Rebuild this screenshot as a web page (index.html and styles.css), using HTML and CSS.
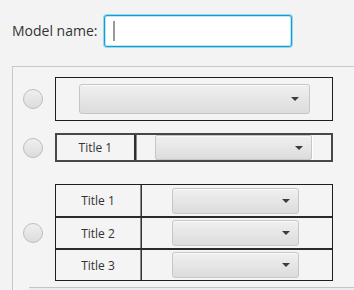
FILE: index.html
```html
<!DOCTYPE html>
<html>
<head>
<meta charset="utf-8">
<link rel="stylesheet" href="styles.css">
</head>
<body>
<div class="top">
  <label class="label">Model name:</label>
  <div class="field"><span class="caret"></span></div>
</div>
<div class="panel">
  <div class="row r1">
    <span class="radio"></span>
    <div class="box1">
      <div class="combo c1"><span class="arrow"></span></div>
    </div>
  </div>
  <div class="row r2">
    <span class="radio"></span>
    <div class="box2">
      <div class="cell-title">Title 1</div>
      <div class="gap-cell"></div>
      <div class="combo c2"><span class="arrow"></span></div>
      <div class="end-cell"></div>
    </div>
  </div>
  <div class="row r3">
    <span class="radio"></span>
    <div class="table">
      <div class="trow">
        <div class="tcell">Title 1</div>
        <div class="ccell"><div class="combo c3"><span class="arrow"></span></div></div>
      </div>
      <div class="trow">
        <div class="tcell">Title 2</div>
        <div class="ccell"><div class="combo c3"><span class="arrow"></span></div></div>
      </div>
      <div class="trow last">
        <div class="tcell">Title 3</div>
        <div class="ccell"><div class="combo c3"><span class="arrow"></span></div></div>
      </div>
    </div>
  </div>
  <div class="footer"></div>
</div>
</body>
</html>
```
FILE: styles.css
```css
html, body {
  margin: 0;
  padding: 0;
  background: #f3f3f3;
  overflow: hidden;
}
body {
  font-family: "Open Sans", "Noto Sans", sans-serif;
  color: #333;
}
.top {
  display: flex;
  align-items: center;
  padding: 15px 0 0 12px;
  gap: 5px;
}
.label {
  width: 87px;
  white-space: nowrap;
  font-size: 14px;
  color: #333;
  line-height: 32px;
}
.field {
  box-sizing: border-box;
  width: 188px;
  height: 32px;
  background: #fff;
  border: 1px solid #0a9fd6;
  border-radius: 3px;
  box-shadow: 0 0 0 1px rgba(3, 158, 211, 0.35), inset 0 0 0 1px rgba(3, 158, 211, 0.25);
  display: flex;
  align-items: center;
  padding-left: 8px;
}
.caret {
  display: block;
  width: 2px;
  height: 20px;
  background: #9a9a9a;
}
.panel {
  margin: 19px 0 0 12px;
  border: 1px solid #c8c8c8;
  border-right: none;
  background: #f4f4f4;
  padding: 10px 0 0 10px;
  height: 260px;
  box-sizing: border-box;
}
.row {
  display: flex;
  align-items: center;
  gap: 12px;
}
.r2 { margin-top: 12px; }
.r3 { margin-top: 22px; }
.radio {
  display: block;
  box-sizing: border-box;
  width: 20px;
  height: 20px;
  border-radius: 50%;
  border: 1px solid #bdbdbd;
  background: linear-gradient(#efefef, #dcdcdc);
  flex: none;
}
.box1 {
  box-sizing: border-box;
  width: 278px;
  height: 44px;
  border: 1px solid #1e1e1e;
  display: flex;
  align-items: center;
  justify-content: center;
  padding-bottom: 1px;
}
.combo {
  position: relative;
  box-sizing: border-box;
  border: 1px solid #c6c6c6;
  border-radius: 3px;
  background: linear-gradient(#f0f0f0, #dcdcdc);
  box-shadow: inset 0 1px 0 #fafafa;
}
.arrow {
  position: absolute;
  top: 50%;
  right: 10px;
  margin-top: -2px;
  width: 0;
  height: 0;
  border-left: 4px solid transparent;
  border-right: 4px solid transparent;
  border-top: 4px solid #3c3c3c;
}
.c1 {
  width: 231px;
  height: 30px;
}
.box2 {
  box-sizing: border-box;
  width: 278px;
  height: 29px;
  border: 2px solid #474747;
  display: flex;
}
.cell-title {
  width: 77px;
  border-right: 2px solid #2e2e2e;
  display: flex;
  align-items: center;
  justify-content: center;
  font-size: 12px;
  color: #333;
}
.gap-cell {
  width: 18px;
  border-left: 1px solid #8a8a8a;
}
.c2 {
  width: 158px;
  height: 25px;
  border-radius: 2px;
}
.c2 .arrow { right: 8px; }
.c3 .arrow { right: 8px; }
.end-cell {
  width: 18px;
  border-left: 1px solid #ffffff;
}
.table {
  box-sizing: border-box;
  width: 278px;
  border: 1px solid #1e1e1e;
}
.trow {
  display: flex;
  height: 32px;
  border-bottom: 2px solid #2a2a2a;
  box-sizing: border-box;
}
.trow:first-child { height: 33px; }
.trow.last {
  border-bottom: none;
  height: 30px;
}
.tcell {
  width: 84px;
  border-right: 1px solid #8a8a8a;
  display: flex;
  align-items: center;
  justify-content: center;
  font-size: 12px;
  color: #333;
}
.ccell {
  flex: 1;
  border-left: 1px solid #333;
  display: flex;
  align-items: center;
  padding-left: 30px;
}
.c3 {
  width: 127px;
  height: 26px;
}
.footer {
  margin: 6px 0 0 6px;
  height: 20px;
  border-top: 1px solid #c4c4c4;
  background: #ececec;
}
```
